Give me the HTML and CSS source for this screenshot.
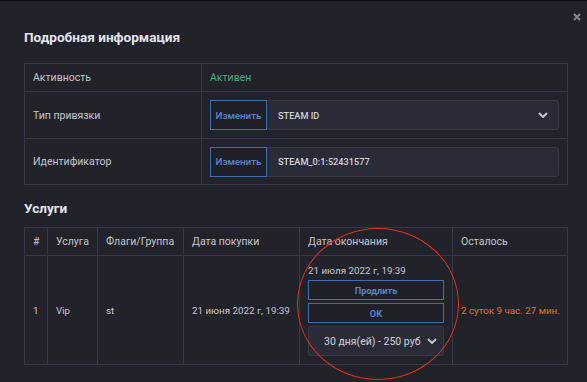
FILE: index.html
```html
<!DOCTYPE html>
<html lang="ru">
<head>
    <meta charset="UTF-8">
    <meta name="viewport" content="width=device-width, initial-scale=1.0">
    <title>Подробная информация</title>
    <link rel="stylesheet" href="styles.css">
</head>
<body>
    <div class="modal">
        <button class="close" type="button" aria-label="Закрыть">
            <svg width="8" height="8" viewBox="0 0 8 8"><path d="M1 1L7 7M7 1L1 7" stroke="#85858c" stroke-width="2"/></svg>
        </button>

        <h2>Подробная информация</h2>
        <table class="info">
            <colgroup><col class="c-label"><col></colgroup>
            <tr class="row-short">
                <td>Активность</td>
                <td class="active">Активен</td>
            </tr>
            <tr>
                <td>Тип привязки</td>
                <td>
                    <div class="input-group">
                        <button type="button" class="btn-outline">Изменить</button>
                        <div class="field select">
                            <span>STEAM ID</span>
                            <svg width="10" height="6" viewBox="0 0 10 6"><path d="M1 1L5 5L9 1" fill="none" stroke="#c4c4d0" stroke-width="2"/></svg>
                        </div>
                    </div>
                </td>
            </tr>
            <tr>
                <td>Идентификатор</td>
                <td>
                    <div class="input-group">
                        <button type="button" class="btn-outline">Изменить</button>
                        <div class="field"><span>STEAM_0:1:52431577</span></div>
                    </div>
                </td>
            </tr>
        </table>

        <h2 class="second">Услуги</h2>
        <table class="services">
            <colgroup>
                <col style="width:23px"><col style="width:50px"><col style="width:86px">
                <col style="width:116px"><col style="width:153px"><col>
            </colgroup>
            <tr class="head">
                <td>#</td>
                <td>Услуга</td>
                <td>Флаги/Группа</td>
                <td>Дата покупки</td>
                <td>Дата окончания</td>
                <td>Осталось</td>
            </tr>
            <tr class="body-row">
                <td>1</td>
                <td>Vip</td>
                <td>st</td>
                <td>21 июня 2022 г, 19:39</td>
                <td class="end-cell">
                    <div class="end-date">21 июля 2022 г, 19:39</div>
                    <button type="button" class="btn-block">Продлить</button>
                    <button type="button" class="btn-block">ОК</button>
                    <div class="field select period">
                        <span>30 дня(ей) - 250 руб</span>
                        <svg width="10" height="6" viewBox="0 0 10 6"><path d="M1 1L5 5L9 1" fill="none" stroke="#c4c4d0" stroke-width="2"/></svg>
                    </div>
                </td>
                <td class="left">2 суток 9 час. 27 мин.</td>
            </tr>
        </table>

        <div class="mark"></div>
    </div>
</body>
</html>
```

FILE: styles.css
```css
body {
    margin: 0;
    background-color: #22222b;
    font-family: Roboto, "Liberation Sans", sans-serif;
    color: #c6c6ce;
}
.modal {
    position: relative;
    height: 381px;
    border-top: 1px solid #0e0e11;
    padding: 0 19px 0 24px;
}
.close {
    position: absolute;
    top: 12px;
    right: 6px;
    padding: 0;
    border: none;
    background: none;
    line-height: 0;
}
h2 {
    margin: 27px 0 17px;
    font-size: 13.6px;
    line-height: 18px;
    font-weight: 700;
    color: #e4e4ea;
}
h2.second {
    margin: 14px 0 10px;
}
table {
    width: 544px;
    border-collapse: collapse;
    table-layout: fixed;
    font-size: 10.5px;
}
td {
    border: 1px solid #35374b;
    padding: 0 8px;
    white-space: nowrap;
}
.c-label {
    width: 177px;
}
.info tr {
    height: 47px;
}
.info tr.row-short {
    height: 28px;
}
.info tr:last-child {
    height: 46px;
}
.active {
    color: #3fb07c;
}
.input-group {
    display: flex;
    height: 30px;
}
.btn-outline {
    width: 57px;
    padding: 0;
    border: 1px solid #3f6fae;
    background-color: #1f1f27;
    color: #5886c6;
    font-family: inherit;
    font-size: 9.8px;
    font-weight: 500;
}
.field {
    flex: 1;
    display: flex;
    align-items: center;
    justify-content: space-between;
    padding: 0 10px 0 11px;
    background-color: #2a2b37;
    border: 1px solid #363846;
    border-left: none;
    border-radius: 0 3px 3px 0;
    color: #d2d2da;
    font-size: 9.2px;
    font-weight: 500;
}
.services tr.head {
    height: 28px;
}
.services tr.body-row {
    height: 107px;
}
.services tr.body-row td {
    font-size: 9.8px;
}
.end-cell {
    padding-top: 8px;
    padding-bottom: 8px;
}
.end-date {
    line-height: 14px;
    margin-bottom: 2px;
}
.btn-block {
    display: block;
    width: 100%;
    height: 20px;
    margin-bottom: 3px;
    padding: 0;
    border: 1px solid #3f6fae;
    background-color: #1f1f27;
    color: #5886c6;
    font-family: inherit;
    font-size: 9.2px;
    font-weight: 700;
}
.period {
    height: 30px;
    box-sizing: border-box;
    border: 1px solid #363846;
    border-radius: 3px;
    padding: 0 6px 0 15px;
    margin-top: 1px;
}
.services tr.body-row .period {
    font-size: 10.5px;
    font-weight: 400;
}
.services tr.body-row .left {
    color: #e0722c;
}
.mark {
    position: absolute;
    left: 297px;
    top: 227px;
    width: 160px;
    height: 150px;
    border: 1px solid #dc3219;
    border-radius: 50%;
    pointer-events: none;
}
```
